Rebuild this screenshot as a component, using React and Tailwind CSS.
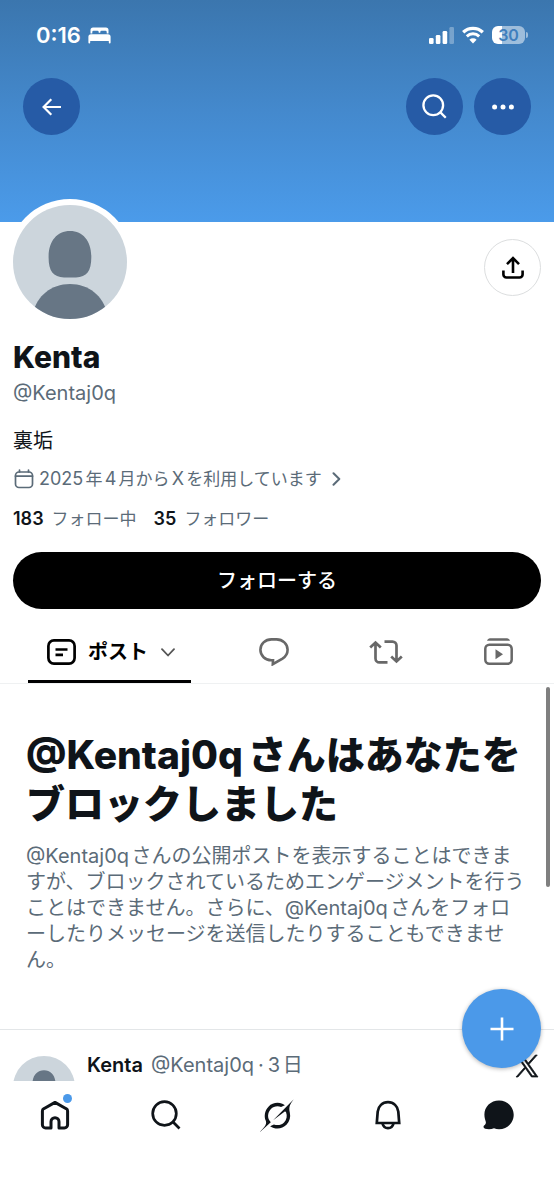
const HANDLE = "@Kentaj0q";

const line = {
  fill: "none",
  stroke: "currentColor",
  strokeLinecap: "round",
  strokeLinejoin: "round",
};

function BedIcon() {
  return (
    <svg viewBox="0 0 23 17" className="h-[17px] w-[23px]" fill="currentColor" aria-hidden="true">
      <path d="M2.5 6.5V3a2.6 2.6 0 0 1 2.6-2.6h12.8A2.6 2.6 0 0 1 20.500 3v3.500h-1.800V5a1.200 1.200 0 0 0-1.200-1.200h-4a1.200 1.200 0 0 0-1.200 1.200v.7h-1.600V5a1.200 1.200 0 0 0-1.200-1.200h-4A1.200 1.200 0 0 0 4.300 5v1.500z" />
      <path d="M3 7.200h17a2.600 2.600 0 0 1 2.600 2.600v5.700a.9.9 0 0 1-1.800 0V14H2.200v1.500a.9.9 0 0 1-1.800 0V9.800A2.600 2.600 0 0 1 3 7.200z" />
    </svg>
  );
}

function SignalIcon() {
  return (
    <svg viewBox="0 0 25 17" className="h-[17px] w-[25px]" fill="currentColor" aria-hidden="true">
      <rect x="0" y="11" width="4.600" height="6" rx="1.300" />
      <rect x="6.800" y="8" width="4.600" height="9" rx="1.300" />
      <rect x="13.600" y="4" width="4.600" height="13" rx="1.300" />
      <rect x="20.400" y="0" width="4.600" height="17" rx="1.300" opacity="0.3" />
    </svg>
  );
}

function WifiIcon() {
  return (
    <svg viewBox="0 0 24 18" className="h-[18px] w-6" aria-hidden="true">
      <path d="M2.200 6.300a14.200 14.200 0 0 1 19.600 0" fill="none" stroke="currentColor" strokeWidth="3.300" />
      <path d="M5.800 10.300a9 9 0 0 1 12.400 0" fill="none" stroke="currentColor" strokeWidth="3" />
      <path d="M12 17.500l-3.600-3.700a5.200 5.200 0 0 1 7.200 0z" fill="currentColor" />
    </svg>
  );
}

function SearchIcon({ className, width = 2 }) {
  return (
    <svg viewBox="0 0 30 30" className={className} {...line} strokeWidth={width} strokeLinecap="butt" aria-hidden="true">
      <circle cx="13.500" cy="13.500" r="11.800" />
      <path d="M21.800 21.800l6.700 6.700" />
    </svg>
  );
}

function Avatar({ className }) {
  return (
    <svg viewBox="0 0 114 114" className={className} role="img" aria-label="Kenta">
      <clipPath id="avatar-clip">
        <circle cx="57" cy="57" r="57" />
      </clipPath>
      <g clipPath="url(#avatar-clip)">
        <rect width="114" height="114" fill="#ccd5dc" />
        <path d="M57 26c13 0 21 10 21.300 25 .3 15-4.300 21-15.300 21.400-4 .2-8 .2-12 0C40 72 35.300 66 35.600 51 36 36 44 26 57 26z" fill="#677685" />
        <path d="M20 108c4-17 18-29 37-29s33 12 37 29v8H20z" fill="#677685" />
      </g>
    </svg>
  );
}

function StatusBar() {
  return (
    <div className="flex h-6 items-center justify-between pr-[26px] pl-9">
      <div className="flex items-center gap-[7px]">
        <span className="text-[22px] leading-6 font-semibold">0:16</span>
        <BedIcon />
      </div>
      <div className="flex items-center gap-[7px]">
        <SignalIcon />
        <WifiIcon />
        <div className="flex items-center gap-px">
          <span className="flex h-[18px] w-[33px] items-center justify-center rounded-md bg-linear-to-r from-white from-30% to-white/50 to-30% text-[16px] leading-[18px] font-semibold text-[#3f7fbd]">
            30
          </span>
          <span className="h-1.5 w-0.5 rounded-r-sm bg-white/50" />
        </div>
      </div>
    </div>
  );
}

const roundButton = "flex size-[57px] items-center justify-center rounded-full bg-[#265ba6]";

function Banner() {
  return (
    <header className="h-[222px] shrink-0 bg-linear-to-b from-[#3b76ae] via-[#4489cd] via-50% to-[#4b9bea] pt-[23px] text-white">
      <StatusBar />
      <div className="mt-[31px] flex gap-[11px] px-[23px]">
        <button type="button" aria-label="戻る" className={roundButton}>
          <svg viewBox="0 0 20 18" className="h-[18px] w-5" {...line} strokeWidth="2.200" aria-hidden="true">
            <path d="M19 9H1.500M9.300 1.300L1.600 9l7.700 7.700" strokeLinecap="butt" strokeLinejoin="miter" />
          </svg>
        </button>
        <span className="grow" />
        <button type="button" aria-label="検索" className={roundButton}>
          <SearchIcon className="size-[25px]" width={2.8} />
        </button>
        <button type="button" aria-label="その他" className={roundButton}>
          <svg viewBox="0 0 22 6" className="h-1.5 w-[22px]" fill="currentColor" aria-hidden="true">
            <circle cx="2.600" cy="3" r="2.500" />
            <circle cx="11" cy="3" r="2.500" />
            <circle cx="19.400" cy="3" r="2.500" />
          </svg>
        </button>
      </div>
    </header>
  );
}

function Profile() {
  return (
    <section className="shrink-0 px-[13px]">
      <div className="-mt-[23px] flex items-center justify-between">
        <div className="relative -ml-1.5 rounded-full bg-white p-1.5">
          <Avatar className="size-[114px]" />
        </div>
        <button
          type="button"
          aria-label="共有"
          className="mt-2.5 flex size-[57px] items-center justify-center rounded-full border border-[#dcdedf] text-black"
        >
          <svg viewBox="0 0 22 23" className="h-[23px] w-[22px]" {...line} strokeWidth="2.600" strokeLinecap="butt" strokeLinejoin="miter" aria-hidden="true">
            <path d="M11 17V2.500M5 8.200l6-6 6 6" />
            <path d="M1.400 14.500v4a3 3 0 0 0 3 3h13.200a3 3 0 0 0 3-3v-4" />
          </svg>
        </button>
      </div>
      <h1 className="mt-3.5 text-[30px] leading-9 font-extrabold">Kenta</h1>
      <p className="mt-[5px] text-[20px] leading-[26px] text-[#5b6b78]">{HANDLE}</p>
      <p className="mt-[22px] text-[20px] leading-[26px]">裏垢</p>
      <a href="#about" className="mt-3 flex h-[26px] items-center text-[17px] text-[#5b6b78]">
        <svg viewBox="0 0 20 20" className="mr-[5px] ml-px size-5" {...line} strokeWidth="1.700" aria-hidden="true">
          <rect x="1.500" y="3" width="17" height="15.500" rx="3.500" />
          <path d="M1.500 7.200h17M5.500 1v2M14.500 1v2" />
        </svg>
        <span>
          <span className="text-[18px]">2025</span>年<span className="text-[18px]">4</span>月から
          <span className="text-[18px]">X</span>を利用しています
        </span>
        <svg viewBox="0 0 9 14" className="ml-2.5 h-3.5 w-[9px]" {...line} strokeWidth="2" aria-hidden="true">
          <path d="M1.500 1.200L7.300 7l-5.800 5.800" />
        </svg>
      </a>
      <div className="mt-3.5 flex gap-[17px] text-[17px] leading-[26px] text-[#5b6b78]">
        <a href="#following" className="flex gap-2">
          <b className="text-[18px] font-semibold text-[#0f1419]">183</b>フォロー中
        </a>
        <a href="#followers" className="flex gap-2">
          <b className="text-[18px] font-semibold text-[#0f1419]">35</b>フォロワー
        </a>
      </div>
      <button type="button" className="mt-5 h-[57px] w-full rounded-full bg-black text-[20px] font-medium text-white">
        フォローする
      </button>
    </section>
  );
}

function Tabs() {
  const tab = "flex flex-1 items-center justify-center text-[#686868]";
  return (
    <nav aria-label="プロフィール" className="flex h-[75px] shrink-0 border-b border-[#eff1f2] pt-[11px]">
      <button type="button" className="ml-7 flex w-[163px] items-center border-b-[3px] border-black pt-1 pl-[19px] text-black">
        <svg viewBox="0 0 29 26" className="mr-3 h-[26px] w-[29px]" {...line} strokeWidth="2.700" strokeLinecap="butt" aria-hidden="true">
          <rect x="1.400" y="1.400" width="26.200" height="23.200" rx="5.500" />
          <path d="M8.500 10.500h12M8.500 15.800h7.500" />
        </svg>
        <span className="text-[20px] leading-[26px] font-bold">ポスト</span>
        <svg viewBox="0 0 14 9" className="ml-[13px] h-[9px] w-3.5 text-[#555]" {...line} strokeWidth="1.800" aria-hidden="true">
          <path d="M1 1.200L7 7.500l6-6.300" />
        </svg>
      </button>
      <div className="ml-[27px] flex grow">
        <button type="button" aria-label="返信" className={tab}>
          <svg viewBox="0 0 30 28" className="h-7 w-[30px]" {...line} strokeWidth="2.600" aria-hidden="true">
            <path d="M14 22.300H12.400C6.200 22.300 1.400 17.600 1.400 11.800S6.200 1.400 12.400 1.400h5.200c6 0 11 4.600 11 10.400 0 3.800-2 6.900-5.100 8.800L13.800 26.200z" strokeLinejoin="miter" />
          </svg>
        </button>
        <button type="button" aria-label="リポスト" className={tab}>
          <svg viewBox="0 0 34 24" className="h-6 w-[34px]" {...line} strokeWidth="2.700" strokeLinecap="butt" strokeLinejoin="miter" aria-hidden="true">
            <path d="M1.200 7.500l5.300-5 5.300 5M6.500 2.800v15.600a4 4 0 0 0 4 4H18.500" />
            <path d="M32.800 16.500l-5.300 5-5.300-5M27.500 21.200V5.600a4 4 0 0 0-4-4H15.500" />
          </svg>
        </button>
        <button type="button" aria-label="動画" className={tab}>
          <svg viewBox="0 0 29 27" className="h-[27px] w-[29px]" {...line} strokeWidth="2.500" aria-hidden="true">
            <rect x="1.300" y="6.800" width="26.400" height="18.900" rx="4" />
            <path d="M3 2.700C3.500 1.200 4.700.3 6 .3h17c1.300 0 2.500.9 3 2.400z" fill="currentColor" stroke="none" />
            <path d="M11.500 11.300v10l7.500-5z" fill="currentColor" stroke="none" />
          </svg>
        </button>
      </div>
    </nav>
  );
}

function Timeline() {
  return (
    <main className="relative min-h-0 grow overflow-hidden">
      <div className="border-b border-[#e3e6e8] px-[26px] pt-[46px] pb-14">
        <h2 className="text-[39px] leading-[49px] font-extrabold">{`${HANDLE}さんはあなたをブロックしました`}</h2>
        <p className="mt-[15px] text-[20px] leading-[26px] text-[#5b6b78]">
          {`${HANDLE}さんの公開ポストを表示することはできますが、ブロックされているためエンゲージメントを行うことはできません。さらに、${HANDLE}さんをフォローしたりメッセージを送信したりすることもできません。`}
        </p>
      </div>
      <article className="flex items-start gap-3 pt-[22px] pr-[15px] pl-[13px]">
        <Avatar className="mt-1 size-[62px] shrink-0" />
        <p className="grow text-[20px] leading-[26px] text-[#5b6b78]">
          <span className="mr-2 font-semibold text-[#0f1419]">Kenta</span>
          {HANDLE}
          <span className="mx-1">·</span>3日
        </p>
        <svg viewBox="0 0 24 24" className="mt-0.5 size-6 shrink-0 text-[#0f1419]" fill="currentColor" stroke="currentColor" strokeWidth="0.700" role="img" aria-label="X">
          <path d="M14.095 10.316 22.286 1h-1.940L13.230 9.088 7.551 1H1l8.590 12.231L1 23h1.940l7.510-8.543L16.449 23H23l-8.905-12.684zm-2.658 3.022-.872-1.218L3.640 2.432h2.980l5.591 7.821.869 1.219 7.265 10.166h-2.982l-5.926-8.300z" />
        </svg>
      </article>
      <div className="absolute top-[3px] right-1 h-[200px] w-1 rounded-full bg-[#7f7f7f]" />
    </main>
  );
}

function BottomBar() {
  const item = "flex h-12 flex-1 items-center justify-center text-[#0f1419]";
  return (
    <div className="relative shrink-0 bg-white pt-2.5 pb-[60px]">
      <nav aria-label="メイン" className="flex">
        <a href="#home" aria-label="ホーム" className={item}>
          <span className="relative">
            <svg viewBox="0 0 30 30" className="size-[30px]" {...line} strokeWidth="3" strokeLinecap="butt" aria-hidden="true">
              <path d="M15 2.400L3.800 8.700A2.400 2.400 0 0 0 2.400 10.900v13.900a3.200 3.200 0 0 0 3.200 3.200H11v-6.300a4 4 0 0 1 8 0V28h5.400a3.200 3.200 0 0 0 3.200-3.200V10.900a2.400 2.400 0 0 0-1.400-2.200z" />
            </svg>
            <span className="absolute -top-1.5 -right-0.5 size-[9px] rounded-full bg-[#4b99e9]" />
          </span>
        </a>
        <a href="#search" aria-label="検索" className={item}>
          <SearchIcon className="size-[30px]" width={2.7} />
        </a>
        <a href="#grok" aria-label="Grok" className={item}>
          <svg viewBox="0 0 33 32" className="h-[33px] w-[34px]" fill="currentColor" aria-hidden="true">
            <path d="M12.745 20.540l10.970-8.190c.539-.4 1.307-.244 1.564.38 1.349 3.288.746 7.241-1.938 9.955-2.683 2.714-6.417 3.310-9.830 1.954l-3.728 1.745c5.347 3.697 11.840 2.782 15.898-1.324 3.219-3.255 4.216-7.692 3.284-11.693l.008.009c-1.351-5.878.332-8.227 3.782-13.031L33 0l-4.540 4.590v-.014L12.743 20.544m-2.263 1.987c-3.837-3.707-3.175-9.446.1-12.755 2.420-2.449 6.388-3.448 9.852-1.979l3.720-1.737c-.67-.49-1.530-1.017-2.515-1.387-4.455-1.854-9.789-.931-13.410 2.728-3.483 3.523-4.579 8.940-2.697 13.561 1.405 3.454-.899 5.898-3.220 8.364C1.490 30.200.666 31.074 0 32l10.478-9.466" />
          </svg>
        </a>
        <a href="#notifications" aria-label="通知" className={item}>
          <svg viewBox="0 0 26 30" className="h-[30px] w-[26px]" {...line} strokeWidth="2.700" strokeLinejoin="miter" aria-hidden="true">
            <path d="M13 2.200c-5.600 0-9.800 4-10.300 9.400L1.800 23h22.400l-.9-11.400C22.800 6.200 18.600 2.200 13 2.200z" />
            <path d="M7.500 23.500c.7 2.800 2.800 4.700 5.500 4.700s4.800-1.900 5.500-4.700" />
          </svg>
        </a>
        <a href="#messages" aria-label="メッセージ" className={item}>
          <svg viewBox="0 0 31 30" className="h-[30px] w-[31px]" fill="currentColor" aria-hidden="true">
            <path d="M16 .5C7.700.5 1.400 6.800 1.400 14.600c0 3.300.8 5 1.300 6.800.6 2-.4 3.200-1.600 4.200-1.100 1-.5 2.700 1 3.100 3 .8 6.200.6 8.900-.4 1.600.6 3.300.9 5 .9 8.300 0 14.700-6.400 14.700-14.400S24.300.5 16 .5z" />
          </svg>
        </a>
      </nav>
      <button
        type="button"
        aria-label="ポストを作成"
        className="absolute right-[13px] bottom-full mb-[13px] flex size-[79px] items-center justify-center rounded-full bg-[#4b99e9] text-white shadow-[0_1px_4px_rgba(0,0,0,0.3)]"
      >
        <svg viewBox="0 0 24 24" className="size-6" {...line} strokeWidth="2.600" strokeLinecap="butt" aria-hidden="true">
          <path d="M12 .5v23M.5 12h23" />
        </svg>
      </button>
    </div>
  );
}

export default function App() {
  return (
    <div
      lang="ja"
      className="flex h-screen flex-col overflow-hidden bg-white font-['Inter','Noto_Sans_CJK_JP',sans-serif] text-[#0f1419] [text-autospace:normal]"
    >
      <Banner />
      <Profile />
      <Tabs />
      <Timeline />
      <BottomBar />
    </div>
  );
}
